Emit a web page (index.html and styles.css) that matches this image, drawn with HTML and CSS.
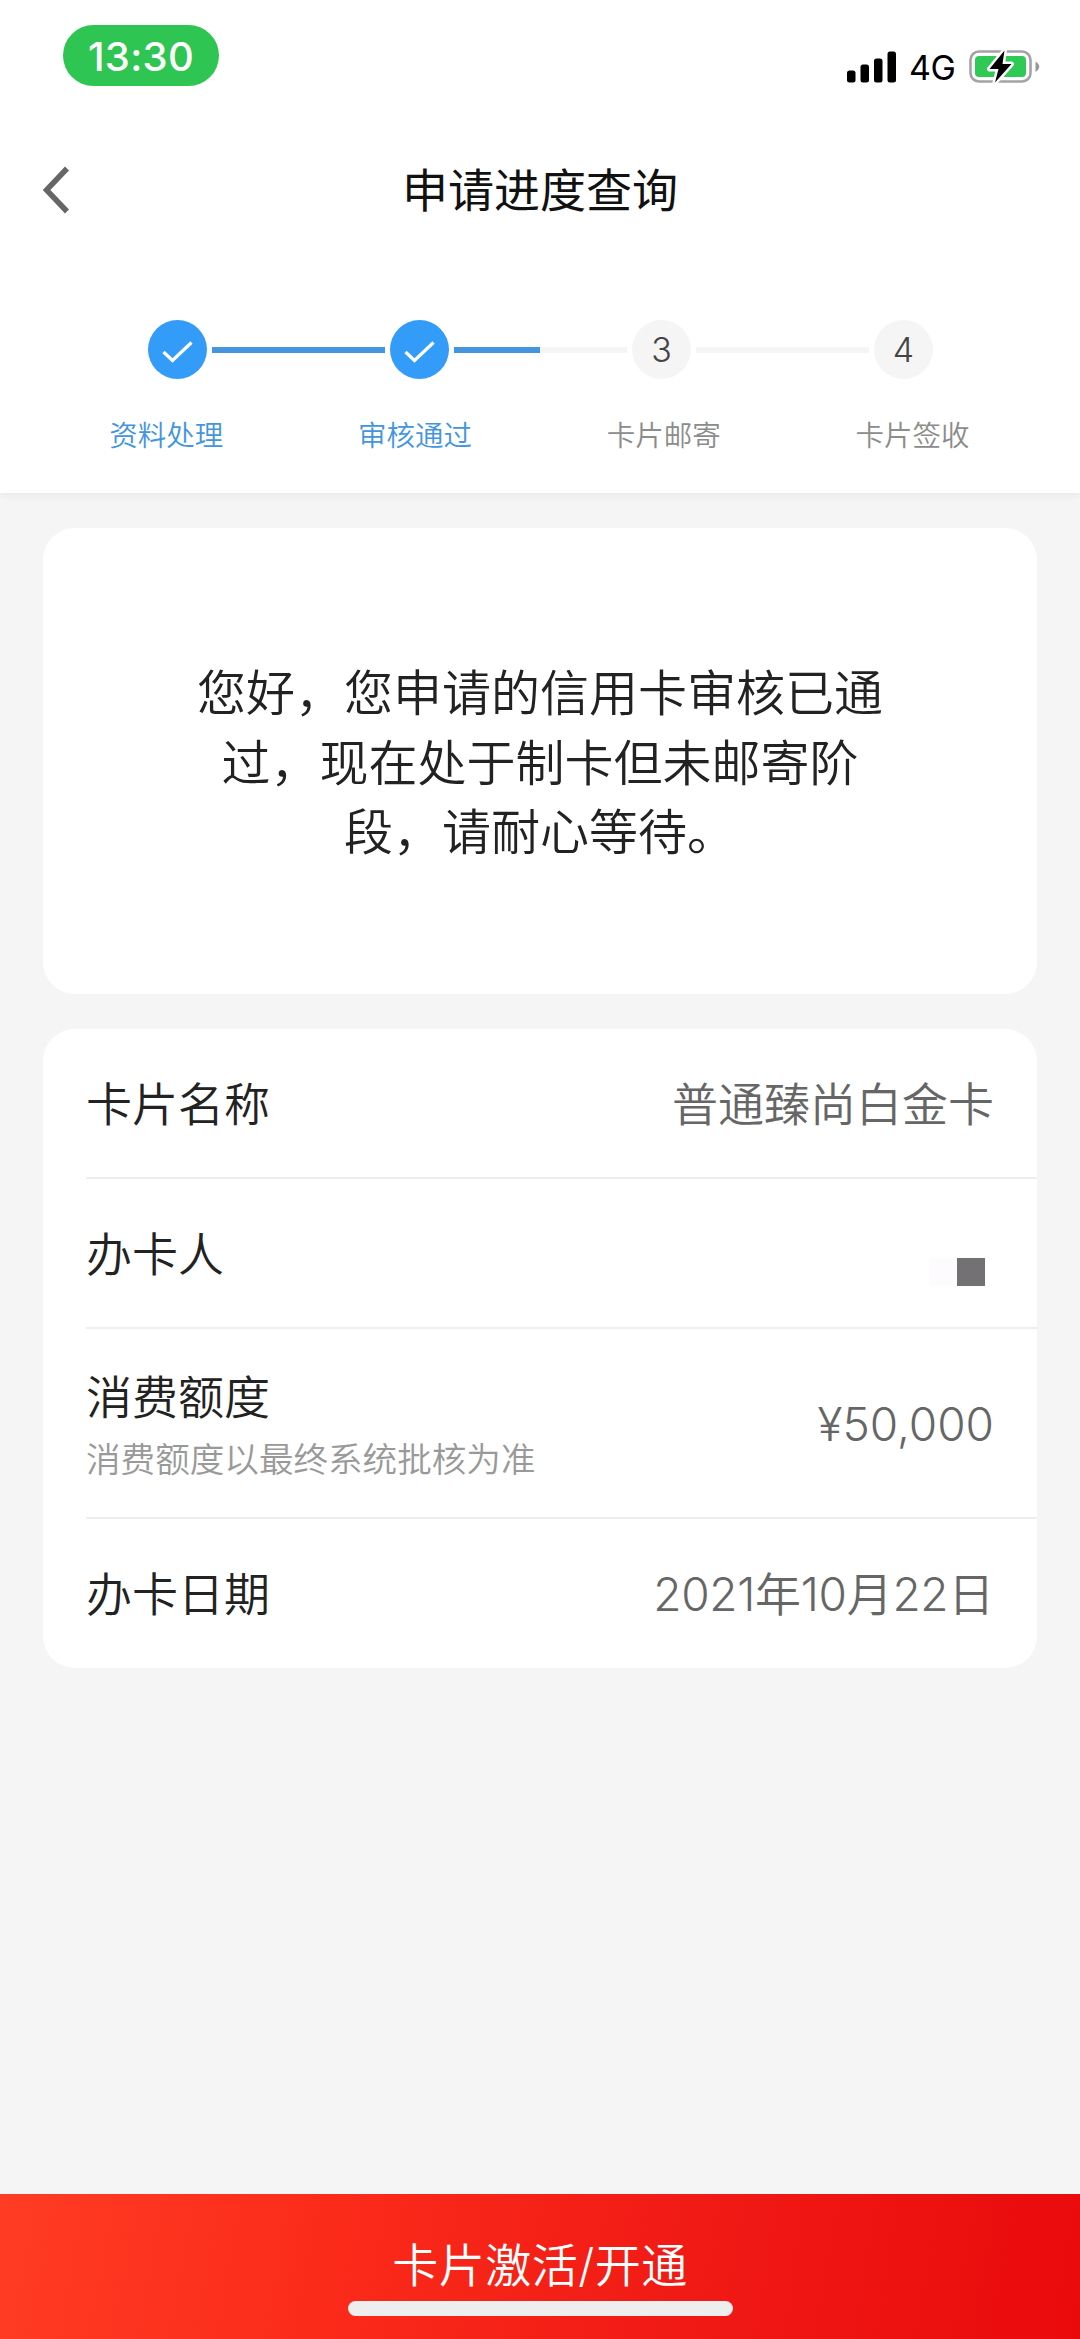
FILE: index.html
```html
<!DOCTYPE html>
<html lang="zh-CN">
<head>
<meta charset="utf-8">
<title>申请进度查询</title>
<link rel="stylesheet" href="styles.css">
</head>
<body>
<div class="screen">
  <header class="top">
    <div class="status">
      <span class="clock">13:30</span>
      <div class="indicators">
        <svg class="signal" viewBox="0 0 50 32" width="50" height="32">
          <rect x="0" y="19.500" width="8.500" height="12" rx="2.500"/>
          <rect x="13.500" y="13.500" width="8.500" height="18" rx="2.500"/>
          <rect x="27" y="7.500" width="8.500" height="24" rx="2.500"/>
          <rect x="40.500" y="0.500" width="8.500" height="31" rx="2.500"/>
        </svg>
        <span class="network">4G</span>
        <svg class="battery" viewBox="0 0 72 36" width="72" height="36">
          <rect x="1.500" y="2.500" width="60" height="30" rx="8.500" fill="none" stroke="#a3a3a6" stroke-width="2.600"/>
          <rect x="6" y="7" width="51" height="21" rx="4" fill="#2fca55"/>
          <path d="M66.500 12.500Q74 17.500 66.500 23Z" fill="#98989b"/>
          <path d="M35.500 1.500 20.500 20h9l-3.500 13.500 16.500-18.500h-9z" fill="#000" stroke="#fff" stroke-width="5" stroke-linejoin="round" paint-order="stroke"/>
        </svg>
      </div>
    </div>
    <nav class="nav">
      <svg class="back" viewBox="0 0 28 48" width="28" height="48"><path d="M24 2.500 3.500 24 24 45.500" fill="none" stroke="#666" stroke-width="5.500"/></svg>
      <h1 class="title">申请进度查询</h1>
    </nav>
    <div class="track">
      <span class="dot done"><svg viewBox="0 0 59 59" width="59" height="59"><path d="M15.500 32 24.500 40.500 43.500 22.500" fill="none" stroke="#fff" stroke-width="3.200"/></svg></span>
      <span class="line done"></span>
      <span class="dot done"><svg viewBox="0 0 59 59" width="59" height="59"><path d="M15.500 32 24.500 40.500 43.500 22.500" fill="none" stroke="#fff" stroke-width="3.200"/></svg></span>
      <span class="line half"></span>
      <span class="dot">3</span>
      <span class="line"></span>
      <span class="dot">4</span>
    </div>
    <div class="labels">
      <span class="label done">资料处理</span>
      <span class="label done">审核通过</span>
      <span class="label">卡片邮寄</span>
      <span class="label">卡片签收</span>
    </div>
  </header>
  <main class="content">
    <section class="card message">
      <p>您好，您申请的信用卡审核已通<br>过，现在处于制卡但未邮寄阶<br>段，请耐心等待。</p>
    </section>
    <section class="card details">
      <div class="row"><span class="name">卡片名称</span><span class="value">普通臻尚白金卡</span></div>
      <div class="row"><span class="name">办卡人</span><span class="mask"><i class="faint"></i><i class="solid"></i></span></div>
      <div class="row tall">
        <div class="stack"><span class="name">消费额度</span><span class="note">消费额度以最终系统批核为准</span></div>
        <span class="value">¥50,000</span>
      </div>
      <div class="row"><span class="name">办卡日期</span><span class="value date">2021年10月22日</span></div>
    </section>
  </main>
  <footer class="action">
    <span class="action-text">卡片激活/开通</span>
    <span class="home"></span>
  </footer>
</div>
</body>
</html>
```
FILE: styles.css
```css
* { box-sizing: border-box; margin: 0; padding: 0; }

body {
  width: 1080px;
  background: #f5f5f5;
  font-family: Inter, "Noto Sans CJK SC", sans-serif;
  font-weight: 350;
}

.screen {
  display: flex;
  flex-direction: column;
  height: 2339px;
  overflow: hidden;
}

.top {
  height: 493px;
  background: #fff;
  box-shadow: 0 2px 9px rgba(0, 0, 0, 0.06);
}

.status {
  display: flex;
  justify-content: space-between;
  align-items: flex-start;
  height: 130px;
  padding: 25px 39px 0 63px;
}

.clock {
  width: 156px;
  height: 61px;
  border-radius: 31px;
  background: #2fc552;
  color: #fff;
  font-size: 40px;
  font-weight: 450;
  line-height: 63px;
  letter-spacing: 0.3px;
  text-align: center;
}

.indicators {
  display: flex;
  align-items: center;
  margin-top: 24px;
  height: 36px;
}

.network {
  width: 47px;
  margin: 2px 13px 0 12px;
  font-size: 34px;
  font-weight: 400;
  line-height: 36px;
  letter-spacing: -0.5px;
  white-space: nowrap;
}

.nav {
  display: grid;
  grid-template-columns: 120px 1fr 120px;
  align-items: center;
  height: 120px;
}

.back { margin-left: 43px; }

.title {
  color: #111;
  font-size: 46px;
  font-weight: 400;
  line-height: 60px;
  text-align: center;
}

.track {
  display: flex;
  align-items: center;
  gap: 5px;
  margin-top: 70px;
  padding: 0 147px 0 148px;
}

.dot {
  flex: none;
  width: 59px;
  height: 59px;
  border-radius: 50%;
  background: #f5f5f5;
  color: #444;
  font-size: 34px;
  line-height: 60px;
  text-align: center;
}

.dot.done { background: #339cf8; }
.dot svg { display: block; }

.line {
  flex: 1;
  height: 6px;
  background: #f5f5f5;
}

.line.done { background: #4395e0; }
.line.half { background: linear-gradient(90deg, #4395e0 50%, #f5f5f5 50%); }

.labels {
  display: grid;
  grid-template-columns: repeat(4, 248.700px);
  margin: 37px 0 0 42px;
}

.label {
  color: #8c8c8c;
  font-size: 28.500px;
  line-height: 40px;
  text-align: center;
}

.label.done { color: #4395e0; }

.content {
  display: flex;
  flex: 1;
  flex-direction: column;
  gap: 35px;
  padding: 35px 43px 0;
}

.card {
  border-radius: 32px;
  background: #fff;
}

.message {
  height: 466px;
  padding-top: 131px;
  color: #222;
  font-size: 49px;
  line-height: 69.500px;
  text-align: center;
}

.details { padding-left: 43px; }

.row {
  display: flex;
  justify-content: space-between;
  align-items: center;
  height: 150px;
  padding: 2px 43px 0 0;
  border-bottom: 2px solid #eee;
}

.row.tall { height: 190px; }
.row:last-child { height: 149px; padding-top: 0; border: 0; }

.name {
  color: #222;
  font-size: 46px;
  line-height: 60px;
}

.value {
  color: #666;
  font-size: 46px;
  line-height: 60px;
}

.date { letter-spacing: -0.3px; }

.stack { display: flex; flex-direction: column; gap: 10px; }

.note {
  color: #999;
  font-size: 34.600px;
  line-height: 44px;
}

.mask { display: flex; margin: 35px 9px 0 0; }
.mask i { width: 28px; height: 28px; }
.faint { background: #fdfbfe; }
.solid { background: #737173; }

.action {
  display: flex;
  flex-direction: column;
  align-items: center;
  height: 145px;
  padding-top: 41px;
  background: linear-gradient(100deg, #ff3c24 0%, #fb2b1a 30%, #f11b15 62%, #ea0a0c 100%);
}

.action-text {
  color: #fff;
  font-size: 46px;
  line-height: 60px;
  letter-spacing: 0.5px;
}

.home {
  width: 385px;
  height: 15px;
  margin-top: 6px;
  border-radius: 8px;
  background: #eee;
}
```
